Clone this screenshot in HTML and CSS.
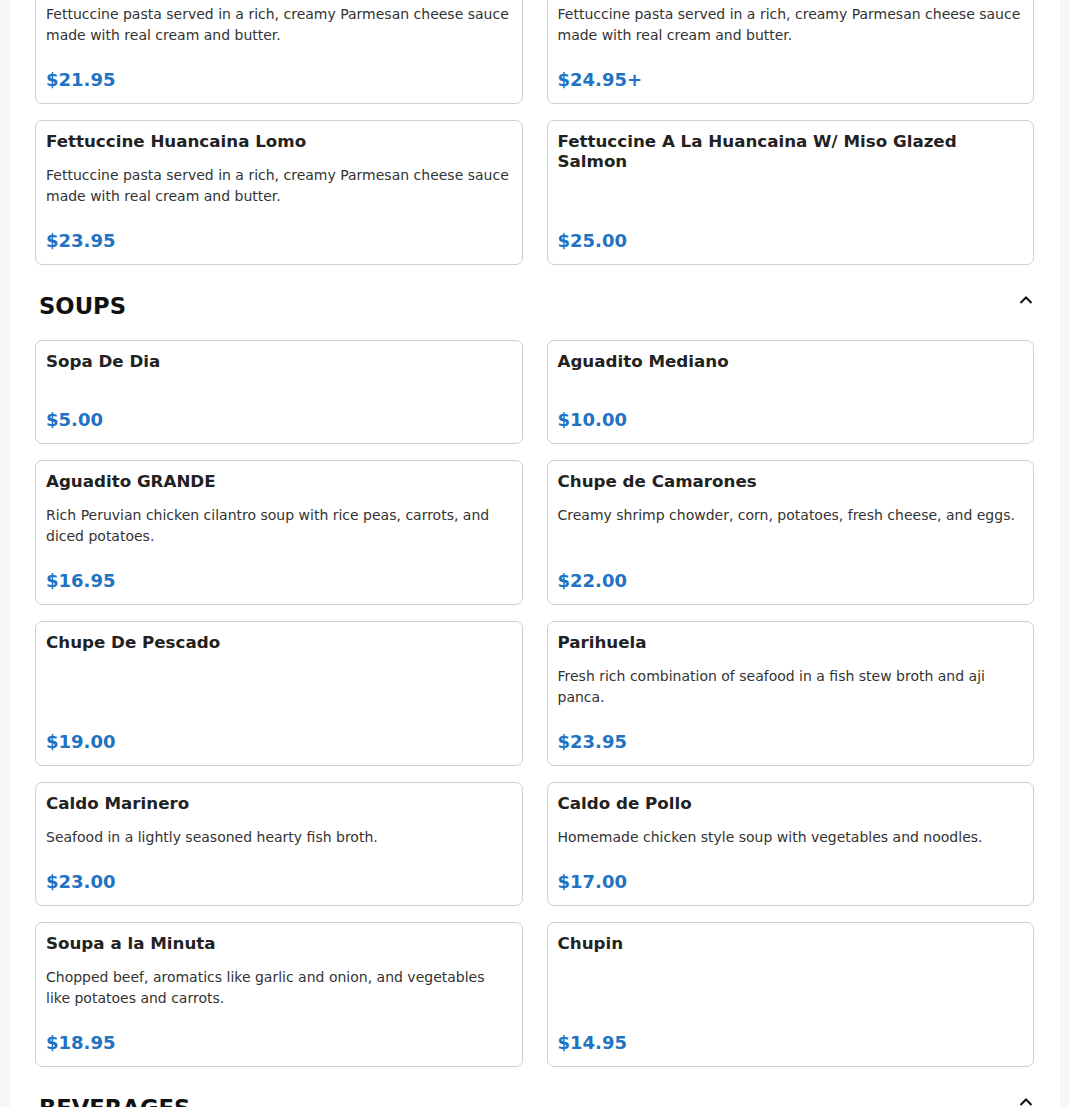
FILE: index.html
```html
<!DOCTYPE html>
<html lang="en">
<head>
<meta charset="utf-8">
<title>Menu</title>
<link rel="stylesheet" href="styles.css">
</head>
<body>
<main class="menu">
  <section class="section">
    <div class="grid">
      <div class="card">
        <h3 class="item-title">Fettuccine Alfredo</h3>
        <p class="item-desc">Fettuccine pasta served in a rich, creamy Parmesan cheese sauce made with real cream and butter.</p>
        <div class="item-price">$21.95</div>
      </div>
      <div class="card">
        <h3 class="item-title">Fettuccine Alfredo with Protein</h3>
        <p class="item-desc">Fettuccine pasta served in a rich, creamy Parmesan cheese sauce made with real cream and butter.</p>
        <div class="item-price">$24.95+</div>
      </div>
      <div class="card">
        <h3 class="item-title">Fettuccine Huancaina Lomo</h3>
        <p class="item-desc">Fettuccine pasta served in a rich, creamy Parmesan cheese sauce made with real cream and butter.</p>
        <div class="item-price">$23.95</div>
      </div>
      <div class="card">
        <h3 class="item-title">Fettuccine A La Huancaina W/ Miso Glazed Salmon</h3>
        <p class="item-desc"></p>
        <div class="item-price">$25.00</div>
      </div>
    </div>
  </section>

  <section class="section">
    <div class="section-head">
      <h2 class="section-title">SOUPS</h2>
      <svg class="chevron" width="14" height="8" viewBox="0 0 14 8" aria-hidden="true"><polyline points="1.5,7 7,1.5 12.5,7" fill="none" stroke="#111" stroke-width="2"/></svg>
    </div>
    <div class="grid">
      <div class="card">
        <h3 class="item-title">Sopa De Dia</h3>
        <p class="item-desc"></p>
        <div class="item-price">$5.00</div>
      </div>
      <div class="card">
        <h3 class="item-title">Aguadito Mediano</h3>
        <p class="item-desc"></p>
        <div class="item-price">$10.00</div>
      </div>
      <div class="card">
        <h3 class="item-title">Aguadito GRANDE</h3>
        <p class="item-desc">Rich Peruvian chicken cilantro soup with rice peas, carrots, and diced potatoes.</p>
        <div class="item-price">$16.95</div>
      </div>
      <div class="card">
        <h3 class="item-title">Chupe de Camarones</h3>
        <p class="item-desc">Creamy shrimp chowder, corn, potatoes, fresh cheese, and eggs.</p>
        <div class="item-price">$22.00</div>
      </div>
      <div class="card">
        <h3 class="item-title">Chupe De Pescado</h3>
        <p class="item-desc"></p>
        <div class="item-price">$19.00</div>
      </div>
      <div class="card">
        <h3 class="item-title">Parihuela</h3>
        <p class="item-desc">Fresh rich combination of seafood in a fish stew broth and aji panca.</p>
        <div class="item-price">$23.95</div>
      </div>
      <div class="card">
        <h3 class="item-title">Caldo Marinero</h3>
        <p class="item-desc">Seafood in a lightly seasoned hearty fish broth.</p>
        <div class="item-price">$23.00</div>
      </div>
      <div class="card">
        <h3 class="item-title">Caldo de Pollo</h3>
        <p class="item-desc">Homemade chicken style soup with vegetables and noodles.</p>
        <div class="item-price">$17.00</div>
      </div>
      <div class="card">
        <h3 class="item-title">Soupa a la Minuta</h3>
        <p class="item-desc">Chopped beef, aromatics like garlic and onion, and vegetables like potatoes and carrots.</p>
        <div class="item-price">$18.95</div>
      </div>
      <div class="card">
        <h3 class="item-title">Chupin</h3>
        <p class="item-desc"></p>
        <div class="item-price">$14.95</div>
      </div>
    </div>
  </section>

  <section class="section">
    <div class="section-head">
      <h2 class="section-title">BEVERAGES</h2>
      <svg class="chevron" width="14" height="8" viewBox="0 0 14 8" aria-hidden="true"><polyline points="1.5,7 7,1.5 12.5,7" fill="none" stroke="#111" stroke-width="2"/></svg>
    </div>
    <div class="grid">
      <div class="card">
        <h3 class="item-title">Inca Kola</h3>
        <p class="item-desc"></p>
        <div class="item-price">$3.50</div>
      </div>
      <div class="card">
        <h3 class="item-title">Chicha Morada</h3>
        <p class="item-desc"></p>
        <div class="item-price">$4.50</div>
      </div>
    </div>
  </section>
</main>
</body>
</html>
```

FILE: styles.css
```css
html, body {
  margin: 0;
  padding: 0;
  background: #f7f7f7;
  font-family: "DejaVu Sans", Verdana, sans-serif;
  color: #222;
  overflow: hidden;
}

.menu {
  width: 1050px;
  margin: -41px 10px 0;
  padding: 0 26px 0 25px;
  box-sizing: border-box;
  background: #fff;
}

.section {
  margin-bottom: 28px;
}

.section-head {
  display: flex;
  justify-content: space-between;
  align-items: flex-start;
  padding: 0 1px 1px 4px;
  margin-bottom: 20px;
}

.section-title {
  margin: 0;
  font-size: 22.7px;
  line-height: 26px;
  font-weight: bold;
  color: #111;
}

.chevron {
  margin-top: 3px;
  display: block;
}

.grid {
  display: grid;
  grid-template-columns: 1fr 1fr;
  gap: 16px 24px;
}

.card {
  display: flex;
  flex-direction: column;
  border: 1px solid #cfcfcf;
  border-radius: 7px;
  padding: 10px;
  background: #fff;
}

.item-title {
  margin: 0;
  font-size: 16.7px;
  line-height: 20px;
  font-weight: bold;
  color: #222;
}

.item-desc {
  margin: 14px 0 0;
  font-size: 14px;
  line-height: 21px;
  color: #333;
}

.item-desc:empty {
  height: 1px;
}

.item-price {
  margin-top: auto;
  padding-top: 20px;
  font-size: 18px;
  line-height: 27px;
  font-weight: bold;
  color: #2272c3;
}
```
